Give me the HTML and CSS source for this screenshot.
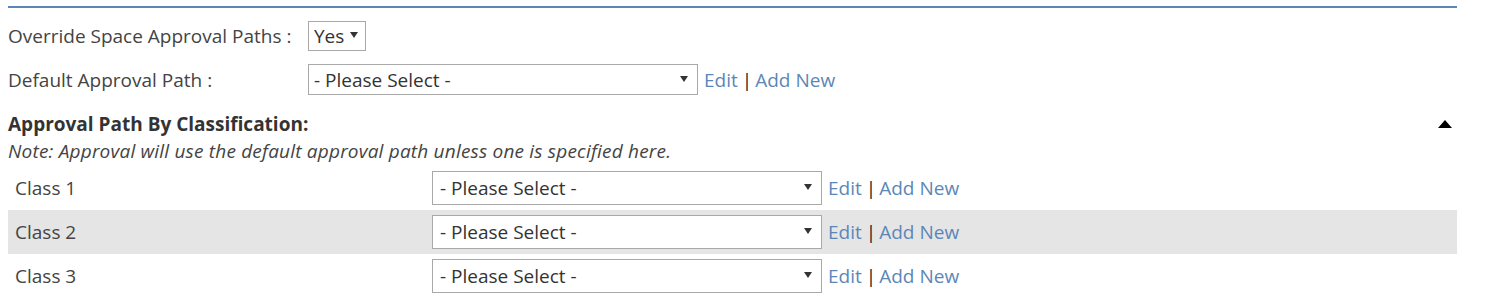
FILE: index.html
```html
<!DOCTYPE html>
<html>
<head>
<meta charset="utf-8">
<link rel="stylesheet" href="styles.css">
</head>
<body>
<div class="page">
  <div class="rule"></div>
  <div class="field field-first">
    <label class="field-label">Override Space Approval Paths :</label>
    <span class="select-wrap select-small"><select class="select"><option>Yes</option></select></span>
  </div>
  <div class="field field-second">
    <label class="field-label">Default Approval Path :</label>
    <span class="select-wrap select-wide"><select class="select"><option>- Please Select -</option></select></span>
    <span class="links"><a class="link">Edit</a><span class="sep">|</span><a class="link">Add New</a></span>
  </div>
  <div class="section-head">
    <span class="section-title">Approval Path By Classification:</span>
    <span class="caret-up"></span>
  </div>
  <div class="note">Note: Approval will use the default approval path unless one is specified here.</div>
  <div class="class-table">
    <div class="class-row">
      <span class="class-name">Class 1</span>
      <span class="select-wrap select-wide"><select class="select select-class"><option>- Please Select -</option></select></span>
      <span class="links"><a class="link">Edit</a><span class="sep">|</span><a class="link">Add New</a></span>
    </div>
    <div class="class-row class-row-alt">
      <span class="class-name">Class 2</span>
      <span class="select-wrap select-wide"><select class="select select-class"><option>- Please Select -</option></select></span>
      <span class="links"><a class="link">Edit</a><span class="sep">|</span><a class="link">Add New</a></span>
    </div>
    <div class="class-row">
      <span class="class-name">Class 3</span>
      <span class="select-wrap select-wide"><select class="select select-class"><option>- Please Select -</option></select></span>
      <span class="links"><a class="link">Edit</a><span class="sep">|</span><a class="link">Add New</a></span>
    </div>
  </div>
</div>
</body>
</html>
```
FILE: styles.css
```css
* { box-sizing: border-box; }
html, body { margin: 0; padding: 0; background: #fff; }
body {
  font-family: "Open Sans", "Noto Sans", sans-serif;
  font-size: 19px;
  color: #444;
}
.page {
  width: 1457px;
  padding-left: 8px;
  padding-top: 6px;
}
.rule {
  height: 2px;
  background: #5b87b8;
}
.field {
  display: flex;
  align-items: center;
}
.field-first { margin-top: 13px; height: 30px; }
.field-second { margin-top: 13px; height: 31px; }
.field-label {
  width: 300px;
  flex: none;
  line-height: 26px;
}
.select-wrap {
  position: relative;
  display: inline-block;
  height: 100%;
  flex: none;
}
.select-wrap::after {
  content: "";
  position: absolute;
  right: 10px;
  top: 50%;
  margin-top: -4px;
  border-left: 4px solid transparent;
  border-right: 4px solid transparent;
  border-top: 6px solid #333;
  pointer-events: none;
}
.select-small { width: 58px; }
.select-small::after { right: 8px; }
.select-wide { width: 390px; }
.select {
  appearance: none;
  -webkit-appearance: none;
  width: 100%;
  height: 100%;
  margin: 0;
  border: 1px solid #a9a9a9;
  border-radius: 0;
  background: #fff;
  font-family: inherit;
  font-size: 19px;
  color: #333;
  padding: 0 20px 0 5px;
}
.select-class { padding-left: 7px; }
.links {
  margin-left: 6px;
  white-space: nowrap;
}
.link {
  color: #5b87b8;
  text-decoration: none;
}
.sep {
  color: #222;
  margin: 0 3px 0 4px;
}
.section-head {
  display: flex;
  align-items: center;
  justify-content: space-between;
  margin-top: 17px;
  height: 24px;
  padding-right: 5px;
}
.section-title {
  font-weight: 700;
  color: #333;
}
.caret-up {
  width: 0;
  height: 0;
  border-left: 7px solid transparent;
  border-right: 7px solid transparent;
  border-bottom: 8px solid #000;
}
.note {
  font-style: italic;
  letter-spacing: 0.2px;
  height: 30px;
  line-height: 30px;
}
.class-row {
  display: flex;
  align-items: center;
  height: 44px;
  padding: 5px 0 5px 7px;
}
.class-row-alt { background: #e5e5e5; }
.class-name {
  width: 417px;
  flex: none;
}
```
